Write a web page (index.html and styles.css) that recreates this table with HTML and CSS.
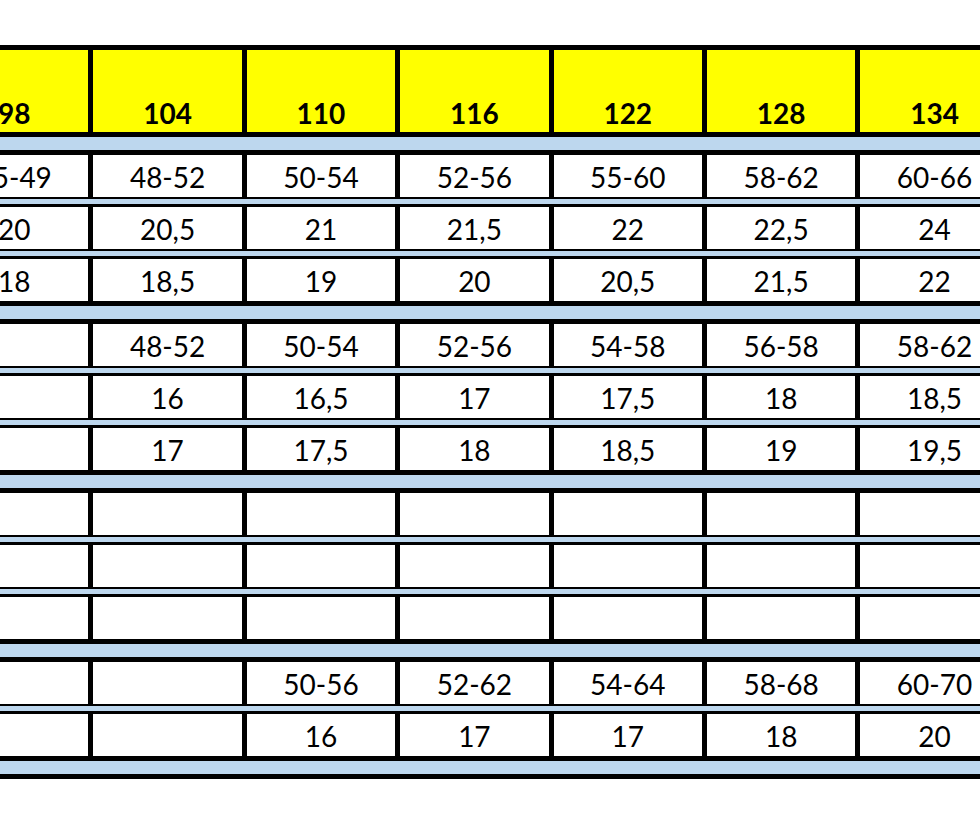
FILE: index.html
```html
<!DOCTYPE html>
<html>
<head>
<meta charset="utf-8">
<link rel="stylesheet" href="styles.css">
</head>
<body>
<div class="sheet">
  <div class="row head">
    <div class="cell">98</div><div class="cell">104</div><div class="cell">110</div><div class="cell">116</div><div class="cell">122</div><div class="cell">128</div><div class="cell">134</div>
  </div>
  <div class="sep thick"></div>

  <div class="row">
    <div class="cell">45-49</div><div class="cell">48-52</div><div class="cell">50-54</div><div class="cell">52-56</div><div class="cell">55-60</div><div class="cell">58-62</div><div class="cell">60-66</div>
  </div>
  <div class="sep thin"></div>
  <div class="row">
    <div class="cell">20</div><div class="cell">20,5</div><div class="cell">21</div><div class="cell">21,5</div><div class="cell">22</div><div class="cell">22,5</div><div class="cell">24</div>
  </div>
  <div class="sep thin"></div>
  <div class="row">
    <div class="cell">18</div><div class="cell">18,5</div><div class="cell">19</div><div class="cell">20</div><div class="cell">20,5</div><div class="cell">21,5</div><div class="cell">22</div>
  </div>
  <div class="sep thick"></div>

  <div class="row">
    <div class="cell"></div><div class="cell">48-52</div><div class="cell">50-54</div><div class="cell">52-56</div><div class="cell">54-58</div><div class="cell">56-58</div><div class="cell">58-62</div>
  </div>
  <div class="sep thin"></div>
  <div class="row">
    <div class="cell"></div><div class="cell">16</div><div class="cell">16,5</div><div class="cell">17</div><div class="cell">17,5</div><div class="cell">18</div><div class="cell">18,5</div>
  </div>
  <div class="sep thin"></div>
  <div class="row">
    <div class="cell"></div><div class="cell">17</div><div class="cell">17,5</div><div class="cell">18</div><div class="cell">18,5</div><div class="cell">19</div><div class="cell">19,5</div>
  </div>
  <div class="sep thick"></div>

  <div class="row">
    <div class="cell"></div><div class="cell"></div><div class="cell"></div><div class="cell"></div><div class="cell"></div><div class="cell"></div><div class="cell"></div>
  </div>
  <div class="sep thin"></div>
  <div class="row">
    <div class="cell"></div><div class="cell"></div><div class="cell"></div><div class="cell"></div><div class="cell"></div><div class="cell"></div><div class="cell"></div>
  </div>
  <div class="sep thin"></div>
  <div class="row">
    <div class="cell"></div><div class="cell"></div><div class="cell"></div><div class="cell"></div><div class="cell"></div><div class="cell"></div><div class="cell"></div>
  </div>
  <div class="sep thick"></div>

  <div class="row">
    <div class="cell"></div><div class="cell"></div><div class="cell">50-56</div><div class="cell">52-62</div><div class="cell">54-64</div><div class="cell">58-68</div><div class="cell">60-70</div>
  </div>
  <div class="sep thin"></div>
  <div class="row">
    <div class="cell"></div><div class="cell"></div><div class="cell">16</div><div class="cell">17</div><div class="cell">17</div><div class="cell">18</div><div class="cell">20</div>
  </div>
  <div class="sep thick"></div>
</div>
</body>
</html>
```
FILE: styles.css
```css
html, body {
  margin: 0;
  padding: 0;
  background: #ffffff;
  overflow: hidden;
}

.sheet {
  margin-top: 45px;
  margin-left: -65px;
  width: 1100px;
  font-family: Lato, "Open Sans", "Liberation Sans", sans-serif;
  color: #000000;
}

.row {
  display: grid;
  grid-template-columns: repeat(7, 148.4px);
  column-gap: 5px;
  padding: 0 5px;
  background: #000000;
}

.cell {
  background: #ffffff;
  height: 42px;
  box-sizing: border-box;
  padding-top: 2px;
  display: flex;
  align-items: center;
  justify-content: center;
  font-size: 28px;
}

.head {
  border-top: 5px solid #000000;
}

.head .cell {
  background: #ffff00;
  height: 82px;
  padding-top: 0;
  padding-bottom: 2px;
  align-items: flex-end;
  font-weight: 700;
}

.sep {
  background: #bdd7ee;
  box-sizing: content-box;
}

.sep.thick {
  height: 13px;
  border-top: 5px solid #000000;
  border-bottom: 5px solid #000000;
}

.sep.thin {
  height: 5px;
  border-top: 2px solid #000000;
  border-bottom: 3px solid #000000;
}
```
